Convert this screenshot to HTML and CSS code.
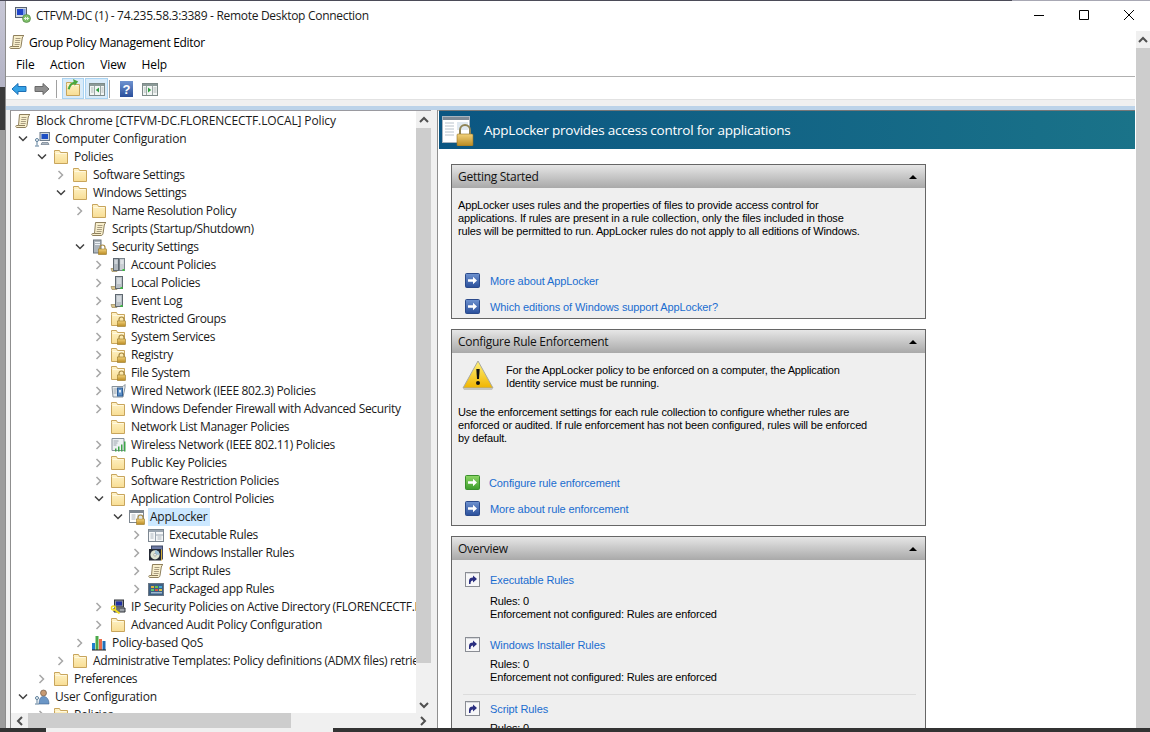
FILE: index.html
```html
<!DOCTYPE html>
<html lang="en">
<head>
<meta charset="utf-8">
<title>Remote Desktop Connection</title>
<link rel="stylesheet" href="styles.css">
</head>
<body>
<svg class="defs" width="0" height="0" aria-hidden="true">
  <defs>
    <linearGradient id="gold" x1="0" y1="0" x2="0" y2="1"><stop offset="0" stop-color="#f3d27a"/><stop offset="1" stop-color="#b98a22"/></linearGradient>
    <linearGradient id="fold" x1="0" y1="0" x2="0" y2="1"><stop offset="0" stop-color="#fff3c8"/><stop offset="1" stop-color="#f8dd93"/></linearGradient>
    <linearGradient id="blue" x1="0" y1="0" x2="0" y2="1"><stop offset="0" stop-color="#6f93d0"/><stop offset="1" stop-color="#2a4f9b"/></linearGradient>
    <linearGradient id="green" x1="0" y1="0" x2="0" y2="1"><stop offset="0" stop-color="#8fd867"/><stop offset="1" stop-color="#3c9c2c"/></linearGradient>
    <linearGradient id="warn" x1="0" y1="0" x2="0" y2="1"><stop offset="0" stop-color="#fff27a"/><stop offset="1" stop-color="#f0b400"/></linearGradient>
    <symbol id="i-folder" viewBox="0 0 16 16"><path d="M1.500 3.500V1.500h5l1 2h7v11h-13z" fill="url(#fold)" stroke="#c8a55c"/><path d="M2.500 4.500h11" stroke="#fff8df"/></symbol>
    <symbol id="i-lock" viewBox="0 0 16 16"><path d="M9 10V8.500a2.500 2.500 0 0 1 5 0V10" fill="none" stroke="#a88a45" stroke-width="1.200"/><rect x="7.500" y="10" width="8" height="5.500" fill="url(#gold)" stroke="#9a7a28" stroke-width=".6"/></symbol>
    <symbol id="i-lockfolder" viewBox="0 0 16 16"><use href="#i-folder"/><use href="#i-lock"/></symbol>
    <symbol id="i-scroll" viewBox="0 0 16 16"><path d="M4.500 1.500h10.500c-1 .5-1.500 1.500-1.700 2.500l-1.300 8.500c-.2 1-.8 2-2 2H1.800c-1.300 0-1.300-2-.3-2h2z" fill="#f8efcc" stroke="#8e7f5c"/><path d="M6.500 4.500h5M6.200 6.500h5M5.900 8.500h5M5.600 10.500h5" stroke="#a89c80"/><path d="M3.500 12.500h6.500" stroke="#8e7f5c"/></symbol>
    <symbol id="i-computers" viewBox="0 0 16 16"><path d="M1 11.500h5l1 3H2z" fill="#d9c58c" stroke="#9a8a5c" stroke-width=".7"/><rect x="3.500" y="1.500" width="5" height="12" fill="#aeb6bd" stroke="#5f6870"/><path d="M4.500 4h3M4.500 6h3" stroke="#eef2f5"/><rect x="9.500" y="1.500" width="5" height="12" fill="#c9ced3" stroke="#7a838b"/><path d="M10.500 4h3M10.500 6h3" stroke="#f3f5f7"/><rect x="12.500" y="12" width="2" height="2" fill="#39c23c"/></symbol>
    <symbol id="i-computer" viewBox="0 0 16 16"><path d="M1 11.500h5l1 3H2z" fill="#d9c58c" stroke="#9a8a5c" stroke-width=".7"/><rect x="5.500" y="1.500" width="7" height="12" fill="#b9c0c6" stroke="#5f6870"/><path d="M7 4h4M7 6h4M7 8h4" stroke="#eef2f5"/><rect x="10.500" y="12" width="2" height="2" fill="#39c23c"/></symbol>
    <symbol id="i-secset" viewBox="0 0 16 16"><rect x="2.500" y="1" width="7.500" height="13" fill="#aeb6bd" stroke="#6b747c"/><path d="M4 3.500h5M4 5.500h5" stroke="#eef2f5"/><use href="#i-lock"/></symbol>
    <symbol id="i-wired" viewBox="0 0 16 16"><path d="M2 3.500h11l2-2v3l-2 9.500H3z" fill="#e8edf0" stroke="#87919a"/><path d="M3.500 6h4M3.500 8h3M3.500 10h3" stroke="#9aa4ac"/><rect x="7.500" y="5" width="5" height="8" fill="#5d8fc6" stroke="#2e5e96"/><rect x="9" y="7" width="2" height="2.500" fill="#dfeaf5"/></symbol>
    <symbol id="i-wireless" viewBox="0 0 16 16"><path d="M2 1.500h12v12H2z" fill="#eef1f3" stroke="#87919a"/><path d="M3.500 4h5M3.500 6h4M3.500 8h3" stroke="#9aa4ac"/><path d="M5 14.500h1.500v-3H5zM8 14.500h1.500v-5H8zM11 14.500h1.500v-7H11zM14 14.500h1.500v-10H14z" fill="#3fa54a"/></symbol>
    <symbol id="i-applocker" viewBox="0 0 16 16"><rect x=".5" y="1.500" width="14" height="12" fill="#fff" stroke="#7e8790"/><path d="M1 3h13" stroke="#7e8790" stroke-width="2"/><path d="M2.500 6h4M2.500 8h4M2.500 10h4" stroke="#aeb5bb"/><rect x="8" y="5" width="5.500" height="4" fill="#dce6ef"/><use href="#i-lock"/></symbol>
    <symbol id="i-window" viewBox="0 0 16 16"><rect x=".5" y="2.500" width="15" height="12" fill="#f5f7f9" stroke="#7d8791"/><path d="M1 4h14" stroke="#9aa5b0" stroke-width="2"/><path d="M7.500 5v9M8 8h7" stroke="#9aa5b0"/><path d="M2.500 7h3M2.500 9h3M2.500 11h3M9.500 10h4M9.500 12h4" stroke="#aeb7bf"/></symbol>
    <symbol id="i-panel-l" viewBox="0 0 16 16"><rect x=".5" y="2.500" width="15" height="12" fill="#f2f5f4" stroke="#7d8a88"/><path d="M1 4h14" stroke="#8c9a98" stroke-width="2"/><path d="M5.500 5v9M11.500 5v9" stroke="#9aa6a4"/><path d="M2 7h2.500M2 9h2.500M2 11h2.500M12.500 7h2M12.500 9h2M12.500 11h2" stroke="#aeb7b5"/><path d="M10 6.500v5L6.800 9z" fill="#2f9e3f"/></symbol>
    <symbol id="i-panel-r" viewBox="0 0 16 16"><rect x=".5" y="2.500" width="15" height="12" fill="#f2f5f4" stroke="#7d8a88"/><path d="M1 4h14" stroke="#8c9a98" stroke-width="2"/><path d="M4.500 5v9M10.500 5v9" stroke="#9aa6a4"/><path d="M1.800 7h2M1.800 9h2M1.800 11h2M11.500 7h3M11.500 9h3M11.500 11h3" stroke="#aeb7b5"/><path d="M6 6.500v5L9.200 9z" fill="#2f9e3f"/></symbol>
    <symbol id="i-installer" viewBox="0 0 16 16"><rect x="3.500" y="1" width="11" height="13" fill="#6d7aa5" stroke="#3e4866"/><rect x="1" y="4" width="12" height="11.500" fill="#252a35"/><circle cx="7" cy="9.800" r="4.600" fill="#dfe4d2"/><path d="M7 5.200a4.600 4.600 0 0 1 4.600 4.600H7z" fill="#9fc2d8"/><circle cx="7" cy="9.800" r="1.300" fill="#fff" stroke="#777" stroke-width=".5"/><path d="M13.500 4.500v11" stroke="#d9b13b"/></symbol>
    <symbol id="i-packaged" viewBox="0 0 16 16"><rect x=".5" y="2.500" width="15" height="12" fill="#3d5f83" stroke="#697684"/><path d="M3 5h3v2H3z" fill="#e2b23b"/><path d="M7 5h3v2H7z" fill="#6cc24a"/><path d="M11 5h3v2h-3z" fill="#46a9d8"/><path d="M3 8h3v2H3z" fill="#5fc46b"/><path d="M7 8h3v2H7z" fill="#d9543c"/><path d="M11 8h3v2h-3z" fill="#ddc246"/><path d="M3 11h11v1.500H3z" fill="#9cb8cf"/></symbol>
    <symbol id="i-ipsec" viewBox="0 0 16 16"><rect x="4.500" y="1" width="9" height="7" fill="#8a8f98" stroke="#33373d"/><rect x="6" y="2.500" width="6" height="4" fill="#1f2fa0"/><path d="M4 9h11v4H4z" fill="#9da2a9" stroke="#33373d"/><path d="M6 11h4" stroke="#444"/><circle cx="3.500" cy="9" r="2" fill="none" stroke="#f3de20" stroke-width="1.500"/><path d="M4.500 10.500l5 4" stroke="#f3de20" stroke-width="1.700"/></symbol>
    <symbol id="i-qos" viewBox="0 0 16 16"><path d="M1 8h3v7H1z" fill="#1f7fd0"/><path d="M4.500 1h3v14h-3z" fill="#4ca84a"/><path d="M8 4h3v11H8z" fill="#e96a4a"/><path d="M11.500 6h3v9h-3z" fill="#1f6fb8"/><path d="M1 15h14" stroke="#222"/></symbol>
    <symbol id="i-user" viewBox="0 0 16 16"><circle cx="9.500" cy="4" r="3" fill="#c79a73" stroke="#5c4a3a" stroke-width=".6"/><path d="M5 15c0-5 1.500-7.500 4.500-7.500S15 10 15 15z" fill="#6b96c6" stroke="#3e638f" stroke-width=".6"/><circle cx="3" cy="9" r="1.500" fill="none" stroke="#5d7f9b"/><path d="M3 10.500v4M1 15h4" stroke="#5d7f9b"/></symbol>
    <symbol id="i-compcfg" viewBox="0 0 16 16"><rect x="6" y="1.500" width="9.500" height="8" fill="#cdd6e0" stroke="#6f7d8c"/><rect x="7.500" y="3" width="6.500" height="5" fill="#1d4fc4"/><path d="M8 11.500h6l1 2H7z" fill="#aeb8c2" stroke="#6f7d8c" stroke-width=".7"/><circle cx="3" cy="9" r="1.500" fill="none" stroke="#5d7f9b"/><path d="M3 10.500v4M1 15h4" stroke="#5d7f9b"/></symbol>
    <symbol id="i-rdp" viewBox="0 0 16 16"><rect x=".5" y=".5" width="11" height="10" fill="#cfd6df" stroke="#59626e"/><path d="M2 2h6v6H2z" fill="#1f44c8"/><path d="M8 2h2.500v6H8z" fill="#7ea0e8"/><circle cx="11.500" cy="11.500" r="4" fill="#7fc06a" stroke="#447a38" stroke-width=".6"/><path d="M9.500 11.500h4M11 10l-1.500 1.500 1.500 1.500M12 10l1.500 1.500-1.500 1.500" fill="none" stroke="#fff" stroke-width=".8"/></symbol>
    <symbol id="i-shortcut" viewBox="0 0 16 16"><rect x=".5" y=".5" width="14" height="14" fill="#f7f7f8" stroke="#8a8d94"/><path d="M1.500 1.500h12" stroke="#d5d7db"/><path d="M4 12V9c0-2.500 1.500-3.500 4-3.500V3.500L12 7 8 10.500V8.500c-1.500 0-2.500.6-2.500 3.500z" fill="#2b2f80"/></symbol>
    <symbol id="i-go" viewBox="0 0 16 16"><rect x=".5" y=".5" width="14" height="14" rx="1" fill="url(#blue)" stroke="#2b4a8b"/><path d="M3 6.200h5V3.800l4 3.700-4 3.700V8.800H3z" fill="#fff"/></symbol>
    <symbol id="i-gogreen" viewBox="0 0 16 16"><rect x=".5" y=".5" width="14" height="14" rx="1" fill="url(#green)" stroke="#3a8f2c"/><path d="M3 6.200h5V3.800l4 3.700-4 3.700V8.800H3z" fill="#fff"/></symbol>
    <symbol id="i-chev-r" viewBox="0 0 8 10"><path d="M1.500 1l4 4-4 4" fill="none" stroke="#a6a6a6" stroke-width="1.500"/></symbol>
    <symbol id="i-chev-d" viewBox="0 0 10 8"><path d="M1 1.500l4 4 4-4" fill="none" stroke="#404040" stroke-width="1.500"/></symbol>
    <symbol id="i-arrow-up" viewBox="0 0 10 8"><path d="M1 6l4-4 4 4" fill="none" stroke="#505050" stroke-width="2"/></symbol>
    <symbol id="i-arrow-down" viewBox="0 0 10 8"><path d="M1 2l4 4 4-4" fill="none" stroke="#505050" stroke-width="2"/></symbol>
    <symbol id="i-arrow-left" viewBox="0 0 8 10"><path d="M6 1L2 5l4 4" fill="none" stroke="#505050" stroke-width="2"/></symbol>
    <symbol id="i-arrow-right" viewBox="0 0 8 10"><path d="M2 1l4 4-4 4" fill="none" stroke="#505050" stroke-width="2"/></symbol>
  </defs>
</svg>

<div class="screen">
  <div class="topline"></div>
  <div class="mid">
    <div class="edge">
      <div class="edge-a"></div>
      <div class="edge-b"></div>
      <div class="edge-c"></div>
    </div>
    <div class="win">
      <header class="titlebar">
        <svg class="tb-icon"><use href="#i-rdp"/></svg>
        <span class="tb-text">CTFVM-DC (1) - 74.235.58.3:3389 - Remote Desktop Connection</span>
        <div class="ctrls">
          <svg class="ctrl" viewBox="0 0 10 10"><path d="M0 5.500h10" stroke="#000"/></svg>
          <svg class="ctrl" viewBox="0 0 10 10"><path d="M.5.500h9v9h-9z" fill="none" stroke="#000"/></svg>
          <svg class="ctrl" viewBox="0 0 10 10"><path d="M0 0l10 10M10 0L0 10" stroke="#000"/></svg>
        </div>
      </header>
      <div class="rdp">
        <div class="app">
          <div class="app-title">
            <svg class="ico"><use href="#i-scroll"/></svg>
            <span>Group Policy Management Editor</span>
          </div>
          <nav class="menu">
            <span>File</span><span>Action</span><span>View</span><span>Help</span>
          </nav>
          <div class="toolbar">
            <svg class="nav-ico" viewBox="0 0 16 14"><path d="M1 7l6-5.500V4.500h8v5H7v3z" fill="#35a2e6" stroke="#1c6fb5"/></svg>
            <svg class="nav-ico" viewBox="0 0 16 14"><path d="M15 7L9 1.500V4.500H1v5h8v3z" fill="#8f8f8f" stroke="#6a6a6a"/></svg>
            <i class="tsep"></i>
            <button class="tbtn on up" type="button"><svg class="ico"><use href="#i-folder"/></svg><svg class="up-arrow" viewBox="0 0 14 14"><path d="M2 12C3 7 5 5 9 4" fill="none" stroke="#4aa83e" stroke-width="2.500"/><path d="M7 0l6 3-4 5z" fill="#4aa83e"/></svg></button>
            <button class="tbtn on wide" type="button"><svg class="ico"><use href="#i-panel-l"/></svg></button>
            <i class="tsep"></i>
            <svg class="help" viewBox="0 0 13 16"><rect width="13" height="16" fill="url(#blue)"/><text x="6.500" y="13" text-anchor="middle" class="help-q">?</text></svg>
            <svg class="ico pane-ico"><use href="#i-panel-r"/></svg>
          </div>
          <div class="subbar"></div>
          <div class="panes">
            <section class="left">
              <div class="left-top">
                <div class="tree">
                  <div class="row l0"><svg class="ico"><use href="#i-scroll"/></svg><span>Block Chrome [CTFVM-DC.FLORENCECTF.LOCAL] Policy</span></div>
                  <div class="row l1"><i class="exp"><svg class="cd"><use href="#i-chev-d"/></svg></i><svg class="ico"><use href="#i-compcfg"/></svg><span>Computer Configuration</span></div>
                  <div class="row l2"><i class="exp"><svg class="cd"><use href="#i-chev-d"/></svg></i><svg class="ico"><use href="#i-folder"/></svg><span>Policies</span></div>
                  <div class="row l3"><i class="exp"><svg class="cr"><use href="#i-chev-r"/></svg></i><svg class="ico"><use href="#i-folder"/></svg><span>Software Settings</span></div>
                  <div class="row l3"><i class="exp"><svg class="cd"><use href="#i-chev-d"/></svg></i><svg class="ico"><use href="#i-folder"/></svg><span>Windows Settings</span></div>
                  <div class="row l4"><i class="exp"><svg class="cr"><use href="#i-chev-r"/></svg></i><svg class="ico"><use href="#i-folder"/></svg><span>Name Resolution Policy</span></div>
                  <div class="row l4"><i class="exp"></i><svg class="ico"><use href="#i-scroll"/></svg><span>Scripts (Startup/Shutdown)</span></div>
                  <div class="row l4"><i class="exp"><svg class="cd"><use href="#i-chev-d"/></svg></i><svg class="ico"><use href="#i-secset"/></svg><span>Security Settings</span></div>
                  <div class="row l5"><i class="exp"><svg class="cr"><use href="#i-chev-r"/></svg></i><svg class="ico"><use href="#i-computers"/></svg><span>Account Policies</span></div>
                  <div class="row l5"><i class="exp"><svg class="cr"><use href="#i-chev-r"/></svg></i><svg class="ico"><use href="#i-computer"/></svg><span>Local Policies</span></div>
                  <div class="row l5"><i class="exp"><svg class="cr"><use href="#i-chev-r"/></svg></i><svg class="ico"><use href="#i-computer"/></svg><span>Event Log</span></div>
                  <div class="row l5"><i class="exp"><svg class="cr"><use href="#i-chev-r"/></svg></i><svg class="ico"><use href="#i-lockfolder"/></svg><span>Restricted Groups</span></div>
                  <div class="row l5"><i class="exp"><svg class="cr"><use href="#i-chev-r"/></svg></i><svg class="ico"><use href="#i-lockfolder"/></svg><span>System Services</span></div>
                  <div class="row l5"><i class="exp"><svg class="cr"><use href="#i-chev-r"/></svg></i><svg class="ico"><use href="#i-lockfolder"/></svg><span>Registry</span></div>
                  <div class="row l5"><i class="exp"><svg class="cr"><use href="#i-chev-r"/></svg></i><svg class="ico"><use href="#i-lockfolder"/></svg><span>File System</span></div>
                  <div class="row l5"><i class="exp"><svg class="cr"><use href="#i-chev-r"/></svg></i><svg class="ico"><use href="#i-wired"/></svg><span>Wired Network (IEEE 802.3) Policies</span></div>
                  <div class="row l5"><i class="exp"><svg class="cr"><use href="#i-chev-r"/></svg></i><svg class="ico"><use href="#i-folder"/></svg><span>Windows Defender Firewall with Advanced Security</span></div>
                  <div class="row l5"><i class="exp"></i><svg class="ico"><use href="#i-folder"/></svg><span>Network List Manager Policies</span></div>
                  <div class="row l5"><i class="exp"><svg class="cr"><use href="#i-chev-r"/></svg></i><svg class="ico"><use href="#i-wireless"/></svg><span>Wireless Network (IEEE 802.11) Policies</span></div>
                  <div class="row l5"><i class="exp"><svg class="cr"><use href="#i-chev-r"/></svg></i><svg class="ico"><use href="#i-folder"/></svg><span>Public Key Policies</span></div>
                  <div class="row l5"><i class="exp"><svg class="cr"><use href="#i-chev-r"/></svg></i><svg class="ico"><use href="#i-folder"/></svg><span>Software Restriction Policies</span></div>
                  <div class="row l5"><i class="exp"><svg class="cd"><use href="#i-chev-d"/></svg></i><svg class="ico"><use href="#i-folder"/></svg><span>Application Control Policies</span></div>
                  <div class="row l6"><i class="exp"><svg class="cd"><use href="#i-chev-d"/></svg></i><svg class="ico"><use href="#i-applocker"/></svg><span class="sel">AppLocker</span></div>
                  <div class="row l7"><i class="exp"><svg class="cr"><use href="#i-chev-r"/></svg></i><svg class="ico"><use href="#i-window"/></svg><span>Executable Rules</span></div>
                  <div class="row l7"><i class="exp"><svg class="cr"><use href="#i-chev-r"/></svg></i><svg class="ico"><use href="#i-installer"/></svg><span>Windows Installer Rules</span></div>
                  <div class="row l7"><i class="exp"><svg class="cr"><use href="#i-chev-r"/></svg></i><svg class="ico"><use href="#i-scroll"/></svg><span>Script Rules</span></div>
                  <div class="row l7"><i class="exp"><svg class="cr"><use href="#i-chev-r"/></svg></i><svg class="ico"><use href="#i-packaged"/></svg><span>Packaged app Rules</span></div>
                  <div class="row l5"><i class="exp"><svg class="cr"><use href="#i-chev-r"/></svg></i><svg class="ico"><use href="#i-ipsec"/></svg><span>IP Security Policies on Active Directory (FLORENCECTF.LOCAL)</span></div>
                  <div class="row l5"><i class="exp"><svg class="cr"><use href="#i-chev-r"/></svg></i><svg class="ico"><use href="#i-folder"/></svg><span>Advanced Audit Policy Configuration</span></div>
                  <div class="row l4"><i class="exp"><svg class="cr"><use href="#i-chev-r"/></svg></i><svg class="ico"><use href="#i-qos"/></svg><span>Policy-based QoS</span></div>
                  <div class="row l3"><i class="exp"><svg class="cr"><use href="#i-chev-r"/></svg></i><svg class="ico"><use href="#i-folder"/></svg><span>Administrative Templates: Policy definitions (ADMX files) retrieved from the central store</span></div>
                  <div class="row l2"><i class="exp"><svg class="cr"><use href="#i-chev-r"/></svg></i><svg class="ico"><use href="#i-folder"/></svg><span>Preferences</span></div>
                  <div class="row l1"><i class="exp"><svg class="cd"><use href="#i-chev-d"/></svg></i><svg class="ico"><use href="#i-user"/></svg><span>User Configuration</span></div>
                  <div class="row l2"><i class="exp"><svg class="cr"><use href="#i-chev-r"/></svg></i><svg class="ico"><use href="#i-folder"/></svg><span>Policies</span></div>
                </div>
                <div class="vs">
                  <div class="vs-btn"><svg class="sa"><use href="#i-arrow-up"/></svg></div>
                  <div class="vs-thumb"></div>
                  <div class="vs-track"></div>
                  <div class="vs-btn"><svg class="sa"><use href="#i-arrow-down"/></svg></div>
                </div>
              </div>
              <div class="hs">
                <div class="hs-btn"><svg class="sah"><use href="#i-arrow-left"/></svg></div>
                <div class="hs-thumb"></div>
                <div class="hs-track"></div>
                <div class="hs-btn"><svg class="sah"><use href="#i-arrow-right"/></svg></div>
              </div>
            </section>
            <div class="split"></div>
            <section class="right">
              <div class="banner">
                <svg class="banner-ico" viewBox="0 0 32 32">
                  <rect x=".5" y="2.500" width="27" height="26" fill="#fff" stroke="#a9b4bf"/>
                  <path d="M1 4.500h26" stroke="#7e8a96" stroke-width="3"/>
                  <path d="M3 9h9M3 12h9M3 15h9M3 18h9M3 21h9" stroke="#b8c2cb"/>
                  <rect x="15" y="8" width="11" height="8" fill="#dfe8f0"/>
                  <path d="M18 21v-5a5 5 0 0 1 10 0v5" fill="none" stroke="#8f8455" stroke-width="2"/>
                  <rect x="15" y="20" width="16" height="12" rx="1" fill="url(#gold)" stroke="#93742a" stroke-width=".6"/>
                </svg>
                <span>AppLocker provides access control for applications</span>
              </div>
              <div class="content">
                <article class="card">
                  <div class="card-h"><span>Getting Started</span><i class="tri"></i></div>
                  <div class="card-b b1">
                    <p>AppLocker uses rules and the properties of files to provide access control for<br>applications. If rules are present in a rule collection, only the files included in those<br>rules will be permitted to run. AppLocker rules do not apply to all editions of Windows.</p>
                    <div class="links l-first">
                      <a class="link"><svg class="lico"><use href="#i-go"/></svg><span>More about AppLocker</span></a>
                      <a class="link"><svg class="lico"><use href="#i-go"/></svg><span>Which editions of Windows support AppLocker?</span></a>
                    </div>
                  </div>
                </article>
                <article class="card">
                  <div class="card-h"><span>Configure Rule Enforcement</span><i class="tri"></i></div>
                  <div class="card-b b2">
                    <div class="warnrow">
                      <svg class="warn" viewBox="0 0 32 30"><path d="M16 1L31 28H1z" fill="url(#warn)" stroke="#a9a9a0"/><path d="M1 28h30l-1 2H2z" fill="#c5c5c0"/><path d="M14.300 9h3.400l-.7 10h-2z" fill="#111"/><circle cx="16" cy="23" r="2" fill="#111"/></svg>
                      <p>For the AppLocker policy to be enforced on a computer, the Application<br>Identity service must be running.</p>
                    </div>
                    <p class="p2">Use the enforcement settings for each rule collection to configure whether rules are<br>enforced or audited. If rule enforcement has not been configured, rules will be enforced<br>by default.</p>
                    <div class="links l-second">
                      <a class="link"><svg class="lico"><use href="#i-gogreen"/></svg><span class="tight">Configure rule enforcement</span></a>
                      <a class="link"><svg class="lico"><use href="#i-go"/></svg><span>More about rule enforcement</span></a>
                    </div>
                  </div>
                </article>
                <article class="card">
                  <div class="card-h"><span>Overview</span><i class="tri"></i></div>
                  <div class="card-b b3">
                    <div class="ov ov1">
                      <a class="link"><svg class="lico s"><use href="#i-shortcut"/></svg><span>Executable Rules</span></a>
                      <p>Rules: 0<br>Enforcement not configured: Rules are enforced</p>
                    </div>
                    <div class="ov ov2">
                      <a class="link"><svg class="lico s"><use href="#i-shortcut"/></svg><span>Windows Installer Rules</span></a>
                      <p>Rules: 0<br>Enforcement not configured: Rules are enforced</p>
                    </div>
                    <div class="ov ruled">
                      <a class="link"><svg class="lico s"><use href="#i-shortcut"/></svg><span>Script Rules</span></a>
                      <p>Rules: 0<br>Enforcement not configured: Rules are enforced</p>
                    </div>
                  </div>
                </article>
              </div>
            </section>
          </div>
        </div>
        <div class="vbar">
          <div class="vbar-btn"><svg class="sa"><use href="#i-arrow-up"/></svg></div>
        </div>
      </div>
    </div>
  </div>
  <div class="taskbar"><div class="tk-a"></div><div class="tk-b"></div><div class="tk-c"></div></div>
</div>
</body>
</html>
```
FILE: styles.css
```css
* { box-sizing: border-box; }
html, body { margin: 0; padding: 0; height: 100%; }
body { overflow: hidden; background: #fff; font-family: "Open Sans", "Noto Sans", sans-serif; font-size: 12px; color: #000; }
.defs { display: block; width: 0; height: 0; }
.screen { display: flex; flex-direction: column; width: 1150px; height: 732px; overflow: hidden; }
.topline { height: 1px; flex: none; background: linear-gradient(90deg, #4b4b58 0, #4b4b58 88%, #a8a8b4 88%, #a8a8b4 100%); }
.mid { flex: 1; min-height: 0; display: flex; }
.edge { width: 5px; flex: none; display: flex; flex-direction: column; }
.edge-a { height: 86px; background: linear-gradient(180deg, #c7c7d6, #b3b3c4); }
.edge-b { height: 43px; background: #3a3a3a; }
.edge-c { flex: 1; background: #9c9c9c; }
.win { flex: 1; min-width: 0; display: flex; flex-direction: column; border-left: 1px solid #8d8d8d; background: #fff; }

.titlebar { height: 30px; flex: none; display: flex; align-items: center; padding: 0 0 2px 9px; }
.tb-icon { width: 16px; height: 16px; flex: none; }
.tb-text { margin-left: 5px; letter-spacing: -.3px; color: #1a1a1a; }
.ctrls { margin-left: auto; display: flex; gap: 35px; padding-right: 16px; }
.ctrl { width: 10px; height: 10px; display: block; }

.rdp { flex: 1; min-height: 0; display: flex; }
.app { flex: 1; min-width: 0; display: flex; flex-direction: column; }
.vbar { width: 14px; flex: none; background: #cdcdcd; margin-left: 1px; }
.vbar-btn { height: 17px; background: #f0f0f0; display: flex; align-items: center; justify-content: center; }

.ico { width: 16px; height: 16px; flex: none; display: block; }
.app-title { height: 22px; flex: none; display: flex; align-items: center; gap: 4px; padding-left: 3px; letter-spacing: -.3px; }
.menu { height: 24px; flex: none; display: flex; align-items: center; gap: 15.500px; padding-left: 10px; border-bottom: 1px solid #b0b0b0; letter-spacing: -.1px; }
.toolbar { height: 22px; flex: none; display: flex; align-items: center; padding: 1px 0 0 5px; }
.nav-ico { width: 16px; height: 14px; flex: none; margin-right: 7px; }
.tsep { width: 1px; height: 18px; background: #a0a0a0; flex: none; margin-right: 5px; margin-left: -1px; }
.tbtn { position: relative; width: 22px; height: 21px; padding: 0; margin: 0 1px 0 0; flex: none; border: 1px solid #a9d3f2; background: #d9ebf9; display: flex; align-items: center; justify-content: center; }
.wide { width: 23px; margin-right: 2px; }
.up-arrow { position: absolute; left: 4px; top: 0; width: 12px; height: 12px; }
.help { width: 13px; height: 16px; flex: none; margin-left: 5px; }
.help-q { fill: #fff; font-family: "Liberation Sans", sans-serif; font-size: 13px; font-weight: 700; }
.pane-ico { margin-left: 9px; }
.subbar { height: 11px; flex: none; background: linear-gradient(180deg, #e2e2e2 0, #e2e2e2 1px, #f0f0f0 1px, #f0f0f0 7px, #bcd3e9 7px); margin-left: 0; }

.panes { flex: 1; min-height: 0; display: flex; background: #f0f0f0; padding-left: 4px; }
.left { width: 421px; flex: none; display: flex; flex-direction: column; border-left: 1px solid #8f8f8f; border-top: 1px solid #9a9aa0; }
.left-top { flex: 1; min-height: 0; display: flex; }
.tree { flex: 1; min-width: 0; background: #fff; overflow: hidden; padding-top: 1px; }
.row { height: 18px; display: flex; align-items: center; white-space: nowrap; color: #1a1a1a; letter-spacing: -.33px; }
.row span { margin-left: 5px; line-height: 18px; }
.row .sel { margin-left: 3px; padding: 0 3px 0 2px; background: #cce8ff; letter-spacing: -.22px; }
.l0 { padding-left: 4px; letter-spacing: -.12px; }
.l1 { padding-left: 2px; letter-spacing: -.22px; }
.l2 { padding-left: 21px; }
.l3 { padding-left: 40px; }
.l4 { padding-left: 59px; }
.l5 { padding-left: 78px; }
.l6 { padding-left: 97px; }
.l7 { padding-left: 116px; }
.exp { width: 19px; flex: none; display: flex; justify-content: center; align-items: center; margin-right: 2px; }
.cd { width: 10px; height: 8px; display: block; }
.cr { width: 8px; height: 10px; display: block; }
.vs { width: 15px; flex: none; display: flex; flex-direction: column; background: #f0f0f0; }
.vs-btn { height: 17px; flex: none; display: flex; align-items: center; justify-content: center; }
.sa { width: 10px; height: 8px; display: block; }
.sah { width: 8px; height: 10px; display: block; }
.vs-thumb { height: 535px; flex: none; background: #cdcdcd; }
.vs-track { flex: 1; }
.hs { height: 15px; flex: none; display: flex; background: #f0f0f0; }
.hs-btn { width: 17px; flex: none; display: flex; align-items: center; justify-content: center; }
.hs-thumb { width: 263px; flex: none; background: #cdcdcd; }
.hs-track { flex: 1; }
.split { width: 7px; flex: none; border-right: 1px solid #8f8f8f; }

.right { flex: 1; min-width: 0; display: flex; flex-direction: column; border-top: 1px solid #777; border-left: 1px solid #fff; }
.banner { height: 38px; flex: none; display: flex; align-items: center; padding-left: 3px; background: linear-gradient(90deg, #0b5682, #1a7389); color: #fff; font-size: 13.500px; }
.banner-ico { width: 32px; height: 32px; flex: none; }
.banner span { margin-left: 10px; letter-spacing: -.24px; }
.content { flex: 1; min-height: 0; overflow: hidden; background: #fff; padding: 15px 0 0 12px; font-family: "Liberation Sans", sans-serif; font-size: 11px; line-height: 13px; }
.card { width: 475px; border: 1px solid #666; margin-bottom: 10px; background: #efefef; }
.card-h { height: 23px; display: flex; align-items: center; justify-content: space-between; padding: 0 8px 0 6px; background: linear-gradient(180deg, #e6e6e6, #a9a9a9); font-family: "Open Sans", sans-serif; font-size: 12px; letter-spacing: -.28px; color: #111; }
.tri { width: 0; height: 0; border-left: 4px solid transparent; border-right: 4px solid transparent; border-bottom: 4px solid #000; }
.card-b { padding: 0 6px; }
.card-b p { margin: 0; letter-spacing: -.16px; }
.b1 { padding-top: 11px; height: 130px; }
.b2 { height: 172px; }
.b3 { padding: 12px 0 0 13px; }
.links { display: flex; flex-direction: column; gap: 10px; padding-left: 7px; }
.l-first { margin-top: 35px; }
.l-second { margin-top: 30px; }
.link { display: flex; align-items: center; height: 16px; color: #1a6dcf; letter-spacing: -.1px; }
.lico { width: 16px; height: 16px; flex: none; display: block; margin-right: 9px; }
.tight { margin-left: -1px; }
.warnrow { display: flex; align-items: flex-start; padding: 7px 0 0 4px; }
.warn { width: 32px; height: 30px; flex: none; margin-right: 12px; }
.warnrow p { margin-top: 4px; }
.card-b .p2 { margin-top: 16px; }
.ov1 { padding-bottom: 16px; }
.ov2 { padding-bottom: 10px; }
.ov1 p { margin: 7px 0 0 25px; }
.ov2 p, .ruled p { margin: 5px 0 0 25px; }
.ruled::before { content: ""; display: block; height: 1px; width: 453px; margin: 0 0 6px -2px; background: #dcdcdc; }
.taskbar { height: 4px; flex: none; display: flex; background: #333; }
.tk-a { width: 46px; }
.tk-b { width: 287px; background: #f0f0f0; }
.tk-c { flex: 1; }
```
